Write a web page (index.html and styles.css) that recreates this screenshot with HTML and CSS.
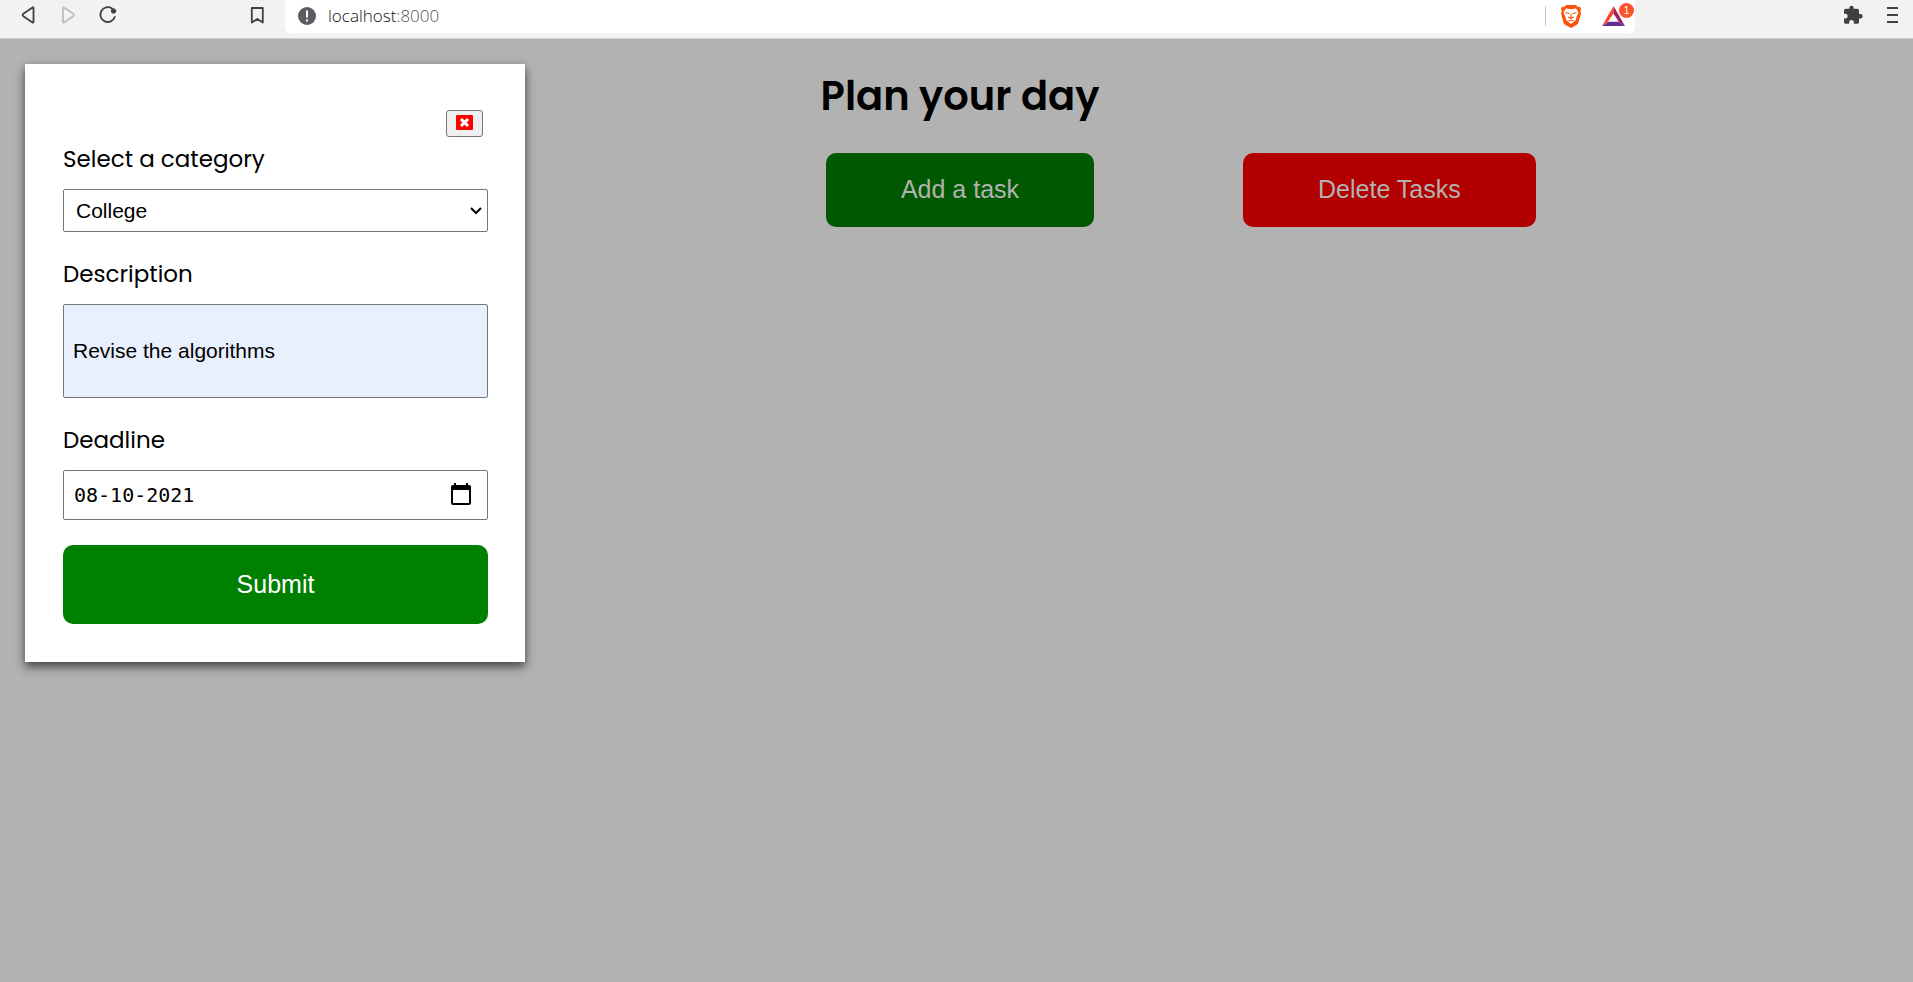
FILE: index.html
```html
<!DOCTYPE html>
<html lang="en">
<head>
<meta charset="utf-8">
<title>Plan your day</title>
<link rel="stylesheet" href="styles.css">
</head>
<body>
<header class="toolbar">
  <nav class="nav">
    <button class="icon-btn" type="button" aria-label="Back"><svg width="24" height="24" viewBox="0 0 24 24" fill="none" stroke="#3f4043" stroke-width="1.8" stroke-linejoin="round"><path d="M17.500 5v14c0 .6-.6.8-1 .5L7 13Q6.100 12 7 11L16.500 4.500c.4-.3 1-.1 1 .5z"/></svg></button>
    <button class="icon-btn" type="button" aria-label="Forward" disabled><svg width="24" height="24" viewBox="0 0 24 24" fill="none" stroke="#bdbdbd" stroke-width="1.8" stroke-linejoin="round"><path d="M7 5v14c0 .6.6.8 1 .5L17.500 13Q18.400 12 17.500 11L8 4.500c-.4-.3-1-.1-1 .5z"/></svg></button>
    <button class="icon-btn" type="button" aria-label="Reload"><svg width="24" height="24" viewBox="0 0 24 24" fill="none" stroke="#3f4043" stroke-width="1.800" stroke-linecap="round"><path d="M16 5.500A7.400 7.400 0 1 0 18.800 14"/><circle cx="17.500" cy="8" r="2.200" fill="#3f4043" stroke-width="1"/></svg></button>
  </nav>
  <button class="icon-btn bookmark" type="button" aria-label="Bookmark"><svg width="24" height="24" viewBox="0 0 24 24" fill="none" stroke="#3f4043" stroke-width="1.800" stroke-linejoin="round"><path d="M6.800 5h11v14.500L12.300 16l-5.500 3.500z"/></svg></button>
  <div class="address">
    <svg width="18" height="18" viewBox="0 0 18 18"><circle cx="9" cy="9" r="9" fill="#5a5d61"/><path d="M9 3.500v7M9 12.500v2" stroke="#fff" stroke-width="2"/></svg>
    <span class="url">localhost<span class="port">:8000</span></span>
    <span class="divider"></span>
    <button class="icon-btn" type="button" aria-label="Shields"><svg width="24" height="24" viewBox="0 0 24 24"><path d="M7 1h10l2 2 2-.3 1 2.300-.7 2 .7 2.500-2.500 9q-.5 1.500-2 2.500L12 24l-5.500-3q-1.500-1-2-2.500L2 9.500 2.700 7 2 5l1-2.300L5 3z" fill="#fb5412"/><path d="M7 4.500l5 .7 5-.7 2.500 4-2 4.500-.7 3L12 20l-4.800-4-.7-3-2-4.500z" fill="#fff"/><path d="M6.500 8.500l4 1.200M17.500 8.500l-4 1.200M12 10v4M9 13l3 1.500 3-1.500M9.500 17l2.500-1 2.500 1" fill="none" stroke="#fb5412" stroke-width="1.100"/></svg></button>
    <button class="icon-btn rewards" type="button" aria-label="Rewards, 1 new"><svg width="23" height="20" viewBox="1 3 22 19"><path d="M12 3v7L6.500 18 1 22z" fill="#ff4724"/><path d="M12 3l11 19-6-4L12 10z" fill="#9e1f63"/><path d="M1 22l6-4h10l6 4z" fill="#662d91"/></svg><span class="badge">1</span></button>
  </div>
  <div class="tools">
    <button class="icon-btn" type="button" aria-label="Extensions"><svg width="24" height="24" viewBox="0 0 24 24"><path d="M19.500 11H18V7.500c0-1-.8-1.800-1.800-1.800h-3.500V5a2.200 2.200 0 0 0-4.400 0v.7H4.800C3.800 5.700 3 6.500 3 7.500v3.300h1.300a2.400 2.400 0 0 1 0 4.800H3v3.300c0 1 .8 1.800 1.800 1.800h3.300v-1.300a2.400 2.400 0 0 1 4.800 0v1.300h3.300c1 0 1.800-.8 1.800-1.800v-3.500h1.500a2.200 2.200 0 0 0 0-4.400z" fill="#3f4043"/></svg></button>
    <button class="icon-btn" type="button" aria-label="Menu"><svg width="24" height="24" viewBox="0 0 24 24"><path d="M6 5h11M6 12h11M6 19h11" stroke="#3f4043" stroke-width="1.800"/></svg></button>
  </div>
</header>
<main class="page">
  <h1 class="title">Plan your day</h1>
  <button class="btn add" type="button">Add a task</button>
  <button class="btn delete" type="button">Delete Tasks</button>
</main>
<form class="dialog" role="dialog" aria-label="Add a task">
  <button class="close" type="button" aria-label="Close"><svg width="17" height="15" viewBox="0 0 17 15"><rect width="17" height="15" rx="1" fill="red"/><path d="M5 4l7 7M12 4l-7 7" stroke="#fff" stroke-width="3"/></svg></button>
  <label class="label" for="category">Select a category</label>
  <div class="field">
    <select class="control category" id="category"><option>College</option></select>
    <svg class="chevron" width="12" height="8" viewBox="0 0 12 8" fill="none" stroke="#000" stroke-width="2"><path d="M1 1l5 5 5-5"/></svg>
  </div>
  <label class="label" for="description">Description</label>
  <div class="field"><input class="control description" id="description" type="text" value="Revise the algorithms"></div>
  <label class="label" for="deadline">Deadline</label>
  <div class="field">
    <input class="control deadline" id="deadline" type="text" value="08-10-2021">
    <button class="picker" type="button" aria-label="Open calendar"><svg width="20" height="22" viewBox="0 0 20 22"><path d="M3 0h2v2h10V0h2v2h1q2 0 2 2v16q0 2-2 2H2q-2 0-2-2V4q0-2 2-2h1zM2 7v13h16V7z" fill-rule="evenodd"/></svg></button>
  </div>
  <button class="btn submit" type="submit">Submit</button>
</form>
</body>
</html>
```
FILE: styles.css
```css
* { box-sizing: border-box; }
body {
  margin: 0;
  min-height: 100vh;
  background: #b2b2b2;
  color: #000;
  font-family: Poppins, Inter, "Liberation Sans", sans-serif;
}
button { font-family: inherit; cursor: pointer; }
svg { display: block; }

.toolbar {
  display: flex;
  align-items: flex-start;
  height: 39px;
  padding-left: 16px;
  background: #f2f2f2;
  border-bottom: 1px solid #d0d2d2;
}
.icon-btn {
  display: flex;
  padding: 0;
  border: 0;
  background: none;
}
.nav { display: flex; gap: 16px; padding-top: 3px; }
.bookmark { margin: 3px 16px 0 125px; }
.address {
  display: flex;
  flex: 1;
  align-items: center;
  height: 33px;
  padding: 0 10px 2px 13px;
  border-radius: 0 0 6px 6px;
  background: #fff;
}
.url {
  flex: 1;
  margin-left: 12px;
  color: #111;
  font: 300 17px/28px "Open Sans", sans-serif;
}
.port { color: #4d5156; }
.divider { width: 1px; height: 20px; margin-right: 13px; background: #c4c4c4; }
.rewards { position: relative; margin-left: 19px; }
.badge {
  position: absolute;
  top: -3px;
  right: -9px;
  width: 15px;
  border-radius: 8px;
  background: #fb542b;
  color: #fff;
  font: 10px/15px "Liberation Sans", sans-serif;
}
.tools { display: flex; gap: 16px; padding: 3px 8px 0 206px; }

.page {
  display: grid;
  grid-template-columns: 1fr auto 1fr;
  column-gap: 149px;
  padding: 27px 0 0 7px;
}
.title {
  grid-column: 1 / -1;
  margin: 0 0 27px;
  font-size: 40px;
  font-weight: 600;
  line-height: 60px;
  text-align: center;
}
.btn {
  padding: 21px 75px 23px;
  border: 0;
  border-radius: 10px;
  color: #b2b2b2;
  font: 25px/30px "Liberation Sans", Arial, sans-serif;
}
.add { grid-column: 2; background: #005900; }
.delete { grid-column: 3; justify-self: start; background: #b20000; }

.dialog {
  position: absolute;
  top: 64px;
  left: 25px;
  display: flex;
  flex-direction: column;
  width: 500px;
  padding: 46px 37px 38px 38px;
  background: #fff;
  box-shadow: 0 4px 8px 0 rgba(0, 0, 0, .5), 0 6px 12px 0 rgba(0, 0, 0, .2);
}
.close {
  align-self: flex-end;
  margin-right: 5px;
  padding: 4px 9px 6px;
  border: 1px solid #767676;
  border-radius: 3px;
  background: #efefef;
}
.label { margin: 4px 0 12px; font-size: 23px; line-height: 36px; }
.field { position: relative; display: flex; margin-bottom: 20px; }
.control {
  width: 100%;
  border: 1px solid #767676;
  border-radius: 2px;
  background: #fff;
  color: #000;
  font: 21px/24px "Liberation Sans", Arial, sans-serif;
}
.category { height: 43px; padding: 0 12px; appearance: none; }
.chevron { position: absolute; top: 18px; right: 6px; pointer-events: none; }
.description { height: 94px; padding: 0 9px; background: #e8f0fe; }
.deadline { height: 50px; padding: 0 10px; font-family: "DejaVu Sans Mono", monospace; font-size: 20px; }
.picker {
  position: absolute;
  top: 13px;
  right: 17px;
  padding: 0;
  border: 0;
  background: none;
}
.submit { margin-top: 5px; padding: 24px; background: #008000; color: #fff; line-height: 31px; }
```
